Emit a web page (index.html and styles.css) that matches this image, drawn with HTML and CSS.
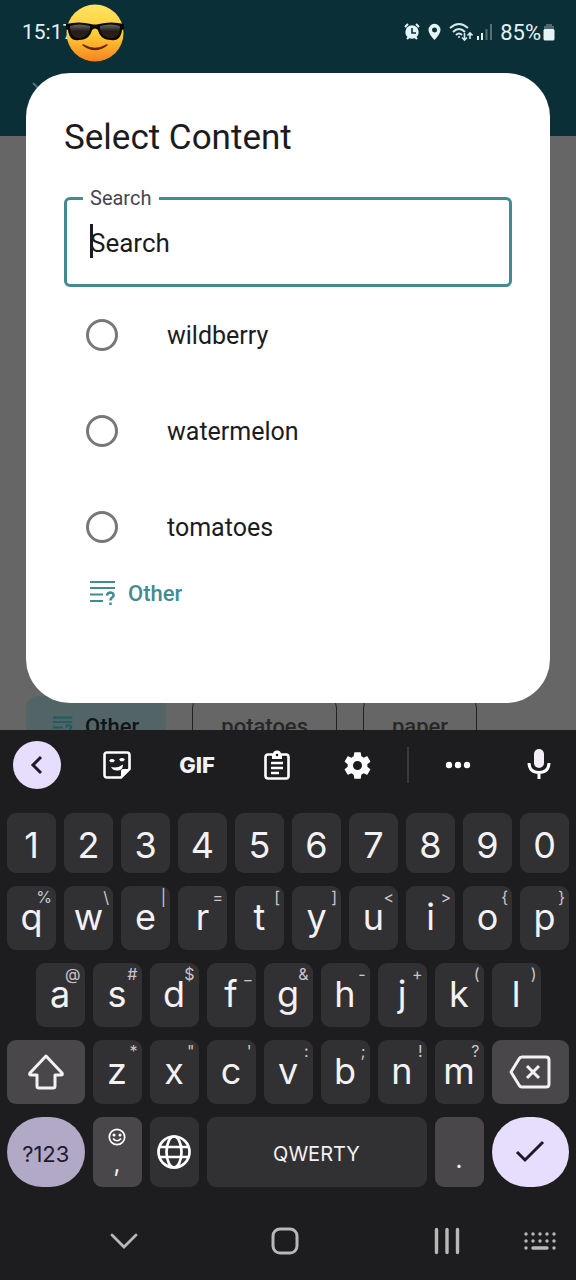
FILE: index.html
```html
<!DOCTYPE html>
<html lang="en">
<head>
<meta charset="utf-8">
<meta name="viewport" content="width=device-width, initial-scale=1">
<title>Select Content</title>
<link rel="stylesheet" href="styles.css">
</head>
<body>
<div class="stage">
  <div class="app">
    <header class="app-header">
      <div class="status">
        <div class="clock">15:17
          <svg class="emoji" viewBox="0 0 58 58" aria-hidden="true">
            <defs>
              <linearGradient id="face" x1="0" y1="0" x2="0" y2="1"><stop offset="0" stop-color="#ffe561"/><stop offset=".55" stop-color="#ffc933"/><stop offset="1" stop-color="#f58220"/></linearGradient>
              <linearGradient id="lens" x1="0" y1="0" x2="0" y2="1"><stop offset="0" stop-color="#666"/><stop offset=".5" stop-color="#241d19"/><stop offset="1" stop-color="#302015"/></linearGradient>
            </defs>
            <circle cx="29" cy="29" r="28.5" fill="url(#face)"/>
            <path d="M0 20Q13 17 25 20Q29 21 33 20Q45 17 58 20V25L56 26C55 35 50 37 45 36C37 36 33 31 32 26Q29 23 26 26C25 31 21 36 13 36C8 37 3 35 2 26L0 25Z" fill="#0b0907"/>
            <path d="M4 22Q13 19 24 22C25 30 18 34 13 34C7 34 4 30 4 22ZM34 22Q45 19 54 22C54 30 51 34 45 34C40 34 33 30 34 22Z" fill="url(#lens)"/>
            <path d="M17 41Q29 50 41 41Q29 48 17 41Z" fill="#6a2408" stroke="#6a2408" stroke-width="1.5" stroke-linejoin="round"/>
          </svg>
        </div>
        <div class="indicators">
          <svg width="16" height="18" viewBox="0 0 16 18" fill="#e3f3f6"><circle cx="8" cy="9" r="6.7"/><path d="M1 4L4 1M15 4L12 1M3 16L5 14M13 16L11 14" stroke="#e3f3f6" stroke-width="2"/><path d="M8 5V10H12" fill="none" stroke="#0b2f37" stroke-width="1.6"/></svg>
          <svg width="13" height="18" viewBox="0 0 13 18"><path fill="#e3f3f6" fill-rule="evenodd" d="M6.500 .8A6 6 0 0 0 .5 7C.5 11 6.500 17 6.500 17S12.500 11 12.500 7A6 6 0 0 0 6.500 .8ZM6.500 4.500A2.500 2.500 0 1 1 6.500 9.500A2.500 2.500 0 0 1 6.500 4.500Z"/></svg>
          <div class="network">
            <svg width="24" height="20" viewBox="0 0 24 20" fill="none" stroke="#d5e8ec" stroke-width="2"><path d="M1 6Q10 -2 19 6M4 10Q10 4 16 10M7 13Q10 10 13 13"/><circle cx="10" cy="15" r="1" fill="#d5e8ec" stroke="none"/><path d="M15.500 11V18M13 15.500L15.500 18L18 15.500M21 17V11M18.500 13.500L21 11L23.500 13.500" stroke-width="1.600"/></svg>
            <svg width="15" height="16" viewBox="0 0 15 16"><path d="M1 12V16M5 9V16" stroke="#e3f3f6" stroke-width="2"/><path d="M9.500 5V16M14 0V16" stroke="#577078" stroke-width="2"/></svg>
          </div>
          <div class="power">
            <span>85%</span>
            <svg width="12" height="18" viewBox="0 0 12 18"><path d="M3 1H9V3H11V7H1V3H3Z" fill="#52686e"/><rect x=".5" y="6" width="11" height="11.500" rx="1.500" fill="#e3f3f6"/></svg>
          </div>
        </div>
      </div>
      <svg class="close" width="24" height="24" viewBox="0 0 24 24"><path d="M1 1L23 23M23 1L1 23" stroke="#587178" stroke-width="2"/></svg>
    </header>
    <div class="chips">
      <div class="chip chip-selected">
        <svg width="20" height="20" viewBox="0 0 26 26" fill="none" stroke="#175e61" stroke-width="2.500"><path d="M0 2H25M0 8H25M0 15H13M0 22H13M17 15Q18 11 21 12Q25 13 23 16L21 19M20.500 22V25"/></svg>
        Other
      </div>
      <div class="chip">potatoes</div>
      <div class="chip">paper</div>
    </div>
  </div>

  <main class="dialog" role="dialog" aria-labelledby="title">
    <h1 class="title" id="title">Select Content</h1>
    <fieldset class="field">
      <legend><label for="search">Search</label></legend>
      <input class="search" id="search" type="text" placeholder="Search">
      <span class="caret"></span>
    </fieldset>
    <div class="options">
      <label class="option"><input type="radio" name="content">wildberry</label>
      <label class="option"><input type="radio" name="content">watermelon</label>
      <label class="option"><input type="radio" name="content">tomatoes</label>
    </div>
    <button class="other" type="button">
      <svg width="26" height="26" viewBox="0 0 26 26" fill="none" stroke="#438b93" stroke-width="2.200"><path d="M0 2H25M0 8H25M0 14.500H13M0 21H13"/><path d="M17 15.500Q17.500 12.500 20.500 12.500Q24 13 23.500 16Q23 17 21.500 18Q20.500 19 20.500 20.500M20.500 22.500V25" stroke-width="2.500"/></svg>
      Other
    </button>
  </main>
</div>

<section class="keyboard" aria-label="Keyboard">
  <div class="toolbar">
    <button class="tool back" type="button" aria-label="Back"><svg width="24" height="24" viewBox="0 0 24 24" fill="none" stroke="#1f1a2b" stroke-width="3"><path d="M16 4L8 12L16 20"/></svg></button>
    <button class="tool" type="button" aria-label="Stickers"><svg width="28" height="28" viewBox="0 0 28 28" fill="none" stroke="#fff" stroke-width="2.600"><path d="M4 1.500H24Q26.500 1.500 26.500 4V18L18 26.500H4Q1.500 26.500 1.500 24V4Q1.500 1.500 4 1.500Z"/><path d="M18 27V20Q18 18 20 18H27Z" fill="#fff" stroke="none"/><path d="M7 10.500Q9 8.500 11 10.500M17 9.500Q19 7.500 21 9.500" stroke-width="2.600"/><path d="M8 16Q15 17.500 20 13.500Q20 19 15 19.500Q10 20 8 16Z" fill="#fff" stroke="none"/></svg></button>
    <button class="tool gif" type="button">GIF</button>
    <button class="tool" type="button" aria-label="Clipboard"><svg width="26" height="30" viewBox="0 0 26 30" fill="none" stroke="#fff" stroke-width="2.600"><rect x="1.500" y="4.500" width="23" height="24" rx="2.500"/><path d="M8 4H18V9H8Z" fill="#fff" stroke="none"/><circle cx="13" cy="4.500" r="4" fill="#fff" stroke="none"/><circle cx="13" cy="5" r="1.300" fill="#1d1d1f" stroke="none"/><path d="M7 13H19M7 18H19M7 23H15" stroke-width="2.300"/></svg></button>
    <button class="tool" type="button" aria-label="Settings"><svg width="33" height="33" viewBox="0 0 24 24" fill="#fff"><path d="M19.140 12.940c.04-.3.060-.61.060-.94 0-.32-.02-.64-.07-.94l2.030-1.580c.18-.14.230-.41.120-.61l-1.920-3.320c-.12-.22-.37-.29-.59-.22l-2.390.96c-.5-.38-1.030-.7-1.620-.94l-.36-2.540c-.04-.24-.24-.41-.48-.41h-3.840c-.24 0-.43.170-.47.410l-.36 2.540c-.59.240-1.130.570-1.620.940l-2.390-.96c-.22-.08-.47 0-.59.220L2.740 8.870c-.12.210-.08.470.120.610l2.030 1.580c-.05.300-.09.630-.09.940s.020.640.070.940l-2.030 1.580c-.18.140-.23.410-.12.610l1.920 3.320c.120.220.370.290.590.220l2.390-.96c.500.380 1.030.700 1.620.940l.360 2.540c.050.240.240.410.480.410h3.840c.240 0 .440-.17.470-.41l.360-2.540c.590-.24 1.130-.56 1.620-.94l2.390.96c.220.080.470 0 .590-.22l1.920-3.320c.120-.22.070-.47-.12-.61l-2.010-1.580zM12 15.300A3.300 3.300 0 1 1 12 8.700A3.300 3.300 0 0 1 12 15.300Z"/></svg></button>
    <span class="divider"></span>
    <button class="tool" type="button" aria-label="More"><svg width="26" height="8" viewBox="0 0 26 8" fill="#fff"><circle cx="4" cy="4" r="3.200"/><circle cx="13" cy="4" r="3.200"/><circle cx="22" cy="4" r="3.200"/></svg></button>
    <button class="tool mic" type="button" aria-label="Voice input"><svg width="24" height="32" viewBox="0 0 24 32" fill="none" stroke="#fff" stroke-width="3"><rect x="7" y="0" width="10" height="19" rx="5" fill="#f3eef6" stroke="none"/><path d="M2 14Q2.500 23.500 12 23.500Q21.500 23.500 22 14M12 23V30"/></svg></button>
  </div>

  <div class="keys">
    <div class="row numbers">
      <button class="key" type="button">1</button><button class="key" type="button">2</button><button class="key" type="button">3</button><button class="key" type="button">4</button><button class="key" type="button">5</button><button class="key" type="button">6</button><button class="key" type="button">7</button><button class="key" type="button">8</button><button class="key" type="button">9</button><button class="key" type="button">0</button>
    </div>
    <div class="row letters">
      <button class="key" type="button">q<span class="hint">%</span></button><button class="key" type="button">w<span class="hint">\</span></button><button class="key" type="button">e<span class="hint">|</span></button><button class="key" type="button">r<span class="hint">=</span></button><button class="key" type="button">t<span class="hint">[</span></button><button class="key" type="button">y<span class="hint">]</span></button><button class="key" type="button">u<span class="hint">&lt;</span></button><button class="key" type="button">i<span class="hint">&gt;</span></button><button class="key" type="button">o<span class="hint">{</span></button><button class="key" type="button">p<span class="hint">}</span></button>
    </div>
    <div class="row letters">
      <button class="key key-first" type="button">a<span class="hint">@</span></button><button class="key" type="button">s<span class="hint">#</span></button><button class="key" type="button">d<span class="hint">$</span></button><button class="key" type="button">f<span class="hint">_</span></button><button class="key" type="button">g<span class="hint">&amp;</span></button><button class="key" type="button">h<span class="hint">-</span></button><button class="key" type="button">j<span class="hint">+</span></button><button class="key" type="button">k<span class="hint">(</span></button><button class="key" type="button">l<span class="hint">)</span></button>
    </div>
    <div class="row letters">
      <button class="key wide alt" type="button" aria-label="Shift"><svg width="38" height="36" viewBox="0 0 38 36" fill="none" stroke="#f4f1f5" stroke-width="3" stroke-linejoin="round"><path d="M19 2L35 19Q36 21 34 21H28V32Q28 34 26 34H12Q10 34 10 32V21H4Q2 21 3 19Z"/></svg></button><button class="key" type="button">z<span class="hint">*</span></button><button class="key" type="button">x<span class="hint">"</span></button><button class="key" type="button">c<span class="hint">'</span></button><button class="key" type="button">v<span class="hint">:</span></button><button class="key" type="button">b<span class="hint">;</span></button><button class="key" type="button">n<span class="hint">!</span></button><button class="key" type="button">m<span class="hint">?</span></button><button class="key wide alt" type="button" aria-label="Delete"><svg width="42" height="34" viewBox="0 0 42 34" fill="none" stroke="#f4f1f5" stroke-width="3" stroke-linejoin="round"><path d="M13 2H37Q40 2 40 5V29Q40 32 37 32H13Q11 32 10 30L2 17L10 4Q11 2 13 2Z"/><path d="M18 11L30 23M30 11L18 23"/></svg></button>
    </div>
    <div class="row bottom">
      <button class="key wide symbols" type="button">?123</button>
      <button class="key alt comma" type="button"><svg width="18" height="18" viewBox="0 0 18 18" fill="none" stroke="#fff" stroke-width="1.700"><circle cx="9" cy="9" r="7.700"/><path d="M5 10.500Q9 15 13 10.500"/><circle cx="6" cy="7" r=".7" fill="#fff"/><circle cx="12" cy="7" r=".7" fill="#fff"/></svg><span>,</span></button>
      <button class="key" type="button" aria-label="Language"><svg width="36" height="36" viewBox="0 0 36 36" fill="none" stroke="#fff" stroke-width="2.700"><circle cx="18" cy="18" r="15.500"/><ellipse cx="18" cy="18" rx="7.500" ry="15.500"/><path d="M4 13H32M4 23H32"/></svg></button>
      <button class="key space" type="button">QWERTY</button>
      <button class="key alt period" type="button">.</button>
      <button class="key wide enter" type="button" aria-label="Done"><svg width="30" height="24" viewBox="0 0 30 24" fill="none" stroke="#1f1a2b" stroke-width="3"><path d="M2 12L10 20L28 2"/></svg></button>
    </div>
  </div>

  <nav class="nav" aria-label="System">
    <button class="tool" type="button" aria-label="Hide keyboard"><svg width="28" height="18" viewBox="0 0 28 18" fill="none" stroke="#b8b8b8" stroke-width="2.800" stroke-linecap="round"><path d="M2 3L14 15L26 3"/></svg></button>
    <button class="tool" type="button" aria-label="Home"><svg width="28" height="28" viewBox="0 0 28 28" fill="none" stroke="#b8b8b8" stroke-width="3"><rect x="2" y="2" width="24" height="24" rx="7"/></svg></button>
    <button class="tool" type="button" aria-label="Recent apps"><svg width="26" height="28" viewBox="0 0 26 28" stroke="#b8b8b8" stroke-width="3.400" stroke-linecap="round"><path d="M2.500 2.500V25.500M13 2.500V25.500M23.500 2.500V25.500"/></svg></button>
    <button class="tool" type="button" aria-label="Switch keyboard"><svg width="32" height="20" viewBox="0 0 32 20" stroke="#b8b8b8" stroke-width="3.400" stroke-linecap="round"><path d="M2 3H2.010M9 3H9.010M16 3H16.010M23 3H23.010M30 3H30.010M2 10H2.010M9 10H9.010M16 10H16.010M23 10H23.010M30 10H30.010M2 17H2.010M9 17H23M30 17H30.010"/></svg></button>
  </nav>
</section>
</body>
</html>
```

FILE: styles.css
```css
* { box-sizing: border-box; }
body {
  margin: 0;
  min-height: 100vh;
  display: flex;
  flex-direction: column;
  background: #1d1d1f;
  color: #1c1b1f;
  font-family: Roboto, sans-serif;
}
button {
  margin: 0;
  padding: 0;
  border: 0;
  background: none;
  color: inherit;
  font: inherit;
}
svg { display: block; flex: none; }

.stage { flex: 1; display: grid; }
.app, .dialog { grid-area: 1 / 1; }

/* dimmed app behind the dialog */
.app {
  display: flex;
  flex-direction: column;
  justify-content: space-between;
  overflow: hidden;
  background: #666;
}
.app-header { height: 136px; background: #0b2f37; }
.status {
  height: 64px;
  padding: 0 21px 0 22px;
  display: flex;
  align-items: center;
  justify-content: space-between;
  color: #e3f3f6;
  font-size: 22px;
}
.clock { position: relative; font-size: 21px; }
.emoji { position: absolute; left: 44px; top: -16px; width: 58px; height: 58px; }
.indicators { display: flex; align-items: center; gap: 8px; }
.network { display: flex; align-items: center; gap: 4px; }
.power { display: flex; align-items: center; gap: 2px; }
.close { margin: 18px 0 0 32px; }
.chips { height: 34px; padding-left: 26px; display: flex; gap: 26px; }
.chip {
  height: 60px;
  padding: 0 28px;
  display: flex;
  flex: none;
  align-items: center;
  gap: 12px;
  border: 1px solid #222;
  border-radius: 12px;
  color: #272727;
  font-size: 22px;
  font-weight: 500;
}
.chip-selected { padding: 0 26px; border-color: #536467; background: #536467; color: #101414; }

.dialog {
  margin: 73px 26px 27px;
  padding: 41px 38px 91px;
  display: flex;
  flex-direction: column;
  align-items: stretch;
  border-radius: 44px;
  background: #fff;
}
.title { margin: 0; font-size: 35px; line-height: 48px; font-weight: 400; }
.field {
  position: relative;
  min-width: 0;
  margin: 26px 0 0;
  padding: 0;
  border: 3px solid #438b93;
  border-radius: 6px;
}
.field legend {
  margin-left: 16px;
  padding: 0 8px 0 7px;
  color: #49454f;
  font-size: 20px;
  line-height: 20px;
}
.search {
  display: block;
  width: 100%;
  height: 76px;
  padding: 0 23px 6px;
  border: 0;
  outline: 0;
  background: transparent;
  color: #1c1b1f;
  font: 26px Roboto, sans-serif;
}
.search::placeholder { color: #1c1b1f; opacity: 1; }
.caret { position: absolute; left: 23px; top: 16px; width: 3px; height: 34px; background: #1c1b1f; }
.option {
  height: 96px;
  padding-left: 22px;
  display: flex;
  align-items: center;
  gap: 49px;
  font-size: 25px;
}
.option input {
  appearance: none;
  width: 32px;
  height: 32px;
  margin: 0;
  border: 3px solid #79777b;
  border-radius: 50%;
}
.other {
  align-self: flex-start;
  height: 36px;
  margin-left: 26px;
  display: flex;
  align-items: center;
  gap: 12px;
  color: #438b93;
  font-size: 22px;
  font-weight: 500;
}

.keyboard { color: #f4f1f5; font-family: Inter, sans-serif; }
.toolbar {
  height: 70px;
  display: grid;
  grid-template-columns: 74fr 86fr 74fr 86fr 74fr 28fr 72fr 82fr;
  align-items: center;
  justify-items: center;
}
.tool { display: flex; align-items: center; justify-content: center; }
.mic { padding-left: 8px; }
.back { width: 48px; height: 48px; border-radius: 50%; background: #e7ddfc; }
.gif { font-size: 22px; font-weight: 800; }
.divider { width: 2px; height: 36px; background: #39393c; }
.keys { padding: 13px 7px 0; display: grid; gap: 13px; }
.row {
  height: 64px;
  display: grid;
  grid-template-columns: repeat(20, minmax(0, 1fr));
  column-gap: 8px;
}
.numbers { height: 60px; }
.bottom { height: 70px; }
.key {
  position: relative;
  grid-column: span 2;
  display: flex;
  align-items: center;
  justify-content: center;
  border-radius: 9px;
  background: #313134;
  font-size: 36px;
  line-height: 40px;
}
.numbers .key { padding-top: 4px; }
.letters .key:not(.alt) { padding-bottom: 2px; }
.key-first { grid-column: 2 / span 2; }
.wide { grid-column: span 3; }
.space { grid-column: span 8; padding-top: 4px; font-size: 20px; }
.alt { background: #4a474b; }
.hint {
  position: absolute;
  right: 4px;
  top: 1px;
  color: #c9c6cb;
  font-size: 16px;
  line-height: 20px;
}
.symbols { padding-top: 4px; border-radius: 35px; background: #b2a9c6; color: #1f1a2b; font-size: 22px; }
.comma { flex-direction: column; gap: 6px; font-size: 24px; line-height: 24px; }
.period { align-items: flex-end; padding-bottom: 13px; font-size: 24px; line-height: 28px; }
.enter { border-radius: 35px; background: #e7ddfc; }
.nav {
  height: 93px;
  padding: 15px 0 0 68px;
  display: grid;
  grid-template-columns: 112fr 210fr 114fr 72fr;
  align-items: center;
  justify-items: center;
}
```
